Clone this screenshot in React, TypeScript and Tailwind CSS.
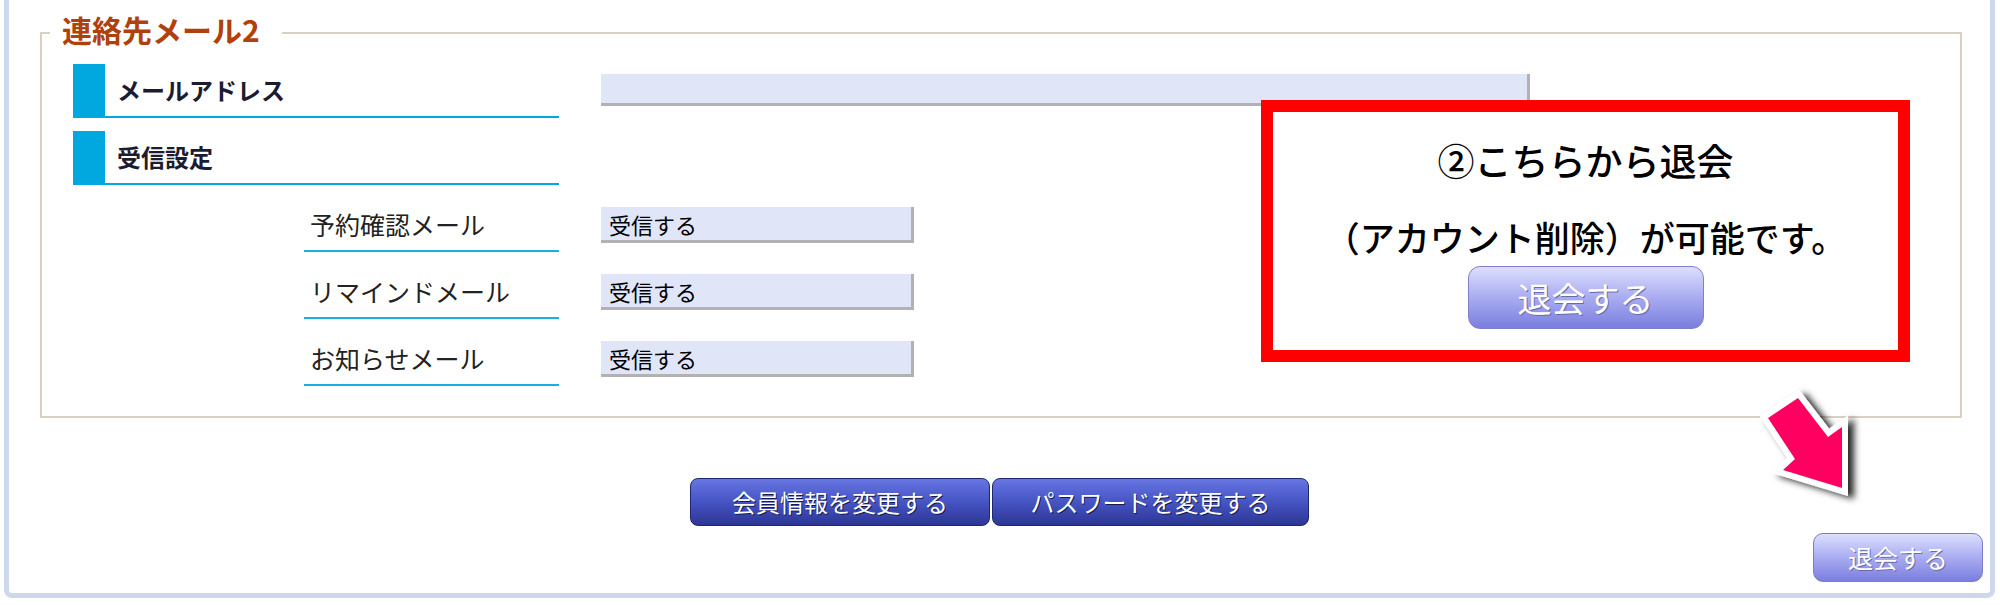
import React from "react";

const jp = "font-['Noto_Sans_CJK_JP','Noto_Sans',sans-serif]";

function SubRow({ label }: { label: string }) {
  return (
    <div className="flex items-start ml-[262px]">
      <div className="w-[255px] h-[67px] border-b-2 border-[#1aaee2] pt-[14px] pl-[6px] flex items-center text-[25px] text-[#222] leading-none">
        {label}
      </div>
      <div className="ml-[42px] mt-[22px] w-[313px] h-[36px] bg-[#e1e5f8] border-r-[3px] border-b-[3px] border-[#b2b2b2] pl-[8px] flex items-center text-[22px] text-black leading-none">
        受信する
      </div>
    </div>
  );
}

function Heading({ text }: { text: string }) {
  return (
    <div className="w-[486px] h-[54px] border-l-[32px] border-b-2 border-[#00a8df] pl-[12px] flex items-center text-[24px] font-bold text-[#1c1c30] leading-none">
      {text}
    </div>
  );
}

export default function App() {
  return (
    <div className={`w-[2000px] h-[605px] bg-white overflow-hidden relative ${jp}`}>
      <div className="ml-[4px] w-[1991px] h-[598px] border-x-[5px] border-b-[5px] border-[#cdd9ea] rounded-b-[8px] flex flex-col">
        <div className="pt-[32px] pl-[31px]">
          <div className="relative w-[1922px] h-[386px] border-2 border-[#d8d0c0] pt-[30px] pl-[31px]">
            <span className="absolute left-[8px] top-[-23px] h-[36px] px-[12px] pr-[22px] bg-white text-[30px] font-bold text-[#b0400c] leading-[36px]">
              連絡先メール2
            </span>
            <div className="flex items-start">
              <Heading text="メールアドレス" />
              <div className="ml-[42px] mt-[10px] w-[929px] h-[32px] bg-[#e1e5f8] border-r-[3px] border-b-[3px] border-[#b2b2b2]" />
            </div>
            <div className="mt-[13px]">
              <Heading text="受信設定" />
            </div>
            <div className="-ml-[31px]">
              <SubRow label="予約確認メール" />
              <SubRow label="リマインドメール" />
              <SubRow label="お知らせメール" />
            </div>
          </div>
        </div>

        <div className="mt-[60px] flex justify-center gap-[2px]">
          <button className="w-[300px] h-[48px] rounded-[8px] border border-[#1e2670] bg-[linear-gradient(to_bottom,#6676e2_0%,#4654c4_50%,#2c3694_100%)] text-white text-[24px] leading-none [text-shadow:1px_1px_0_#141a50]">
            会員情報を変更する
          </button>
          <button className="w-[317px] h-[48px] rounded-[8px] border border-[#1e2670] bg-[linear-gradient(to_bottom,#6676e2_0%,#4654c4_50%,#2c3694_100%)] text-white text-[24px] leading-none [text-shadow:1px_1px_0_#141a50]">
            パスワードを変更する
          </button>
        </div>

        <div className="mt-[7px] flex justify-end pr-[7px]">
          <button className="w-[170px] h-[49px] rounded-[10px] border border-[#7c7cc4] bg-[linear-gradient(to_bottom,#dcdffd_0%,#a9acf0_50%,#7a7ede_100%)] text-white text-[25px] leading-none [text-shadow:1px_1px_0_#6a6aa8]">
            退会する
          </button>
        </div>
      </div>

      <div className="absolute left-[1261px] top-[100px] w-[649px] h-[262px] border-[12px] border-[#ff0000] bg-white flex flex-col items-center text-black">
        <div className="mt-[24px] h-[48px] text-[37px] font-medium leading-[48px]">②こちらから退会</div>
        <div className="mt-[29px] h-[48px] text-[35px] font-medium leading-[48px] whitespace-nowrap">（アカウント削除）が可能です。</div>
        <button className="mt-[5px] w-[236px] h-[63px] rounded-[12px] border border-[#8080c8] bg-[linear-gradient(to_bottom,#dcdffd_0%,#a9acf0_50%,#7a7ede_100%)] text-white text-[34px] leading-none [text-shadow:1px_1px_0_#6a6aa8]">
          退会する
        </button>
      </div>

      <svg className="absolute left-[1740px] top-[370px] overflow-visible" width="150" height="140" viewBox="0 0 150 140">
        <defs>
          <filter id="sh" x="-40%" y="-40%" width="180%" height="180%">
            <feDropShadow dx="6" dy="3" stdDeviation="3.5" floodColor="#000" floodOpacity="0.85" />
          </filter>
        </defs>
        <g filter="url(#sh)">
          <polygon
            points="28,48 58,28 88,67 102,57 102,118 43,100 55,89"
            fill="#ff0060"
            stroke="#ffffff"
            strokeWidth="12"
            strokeLinejoin="miter"
            style={{ paintOrder: "stroke" }}
          />
        </g>
      </svg>
    </div>
  );
}
